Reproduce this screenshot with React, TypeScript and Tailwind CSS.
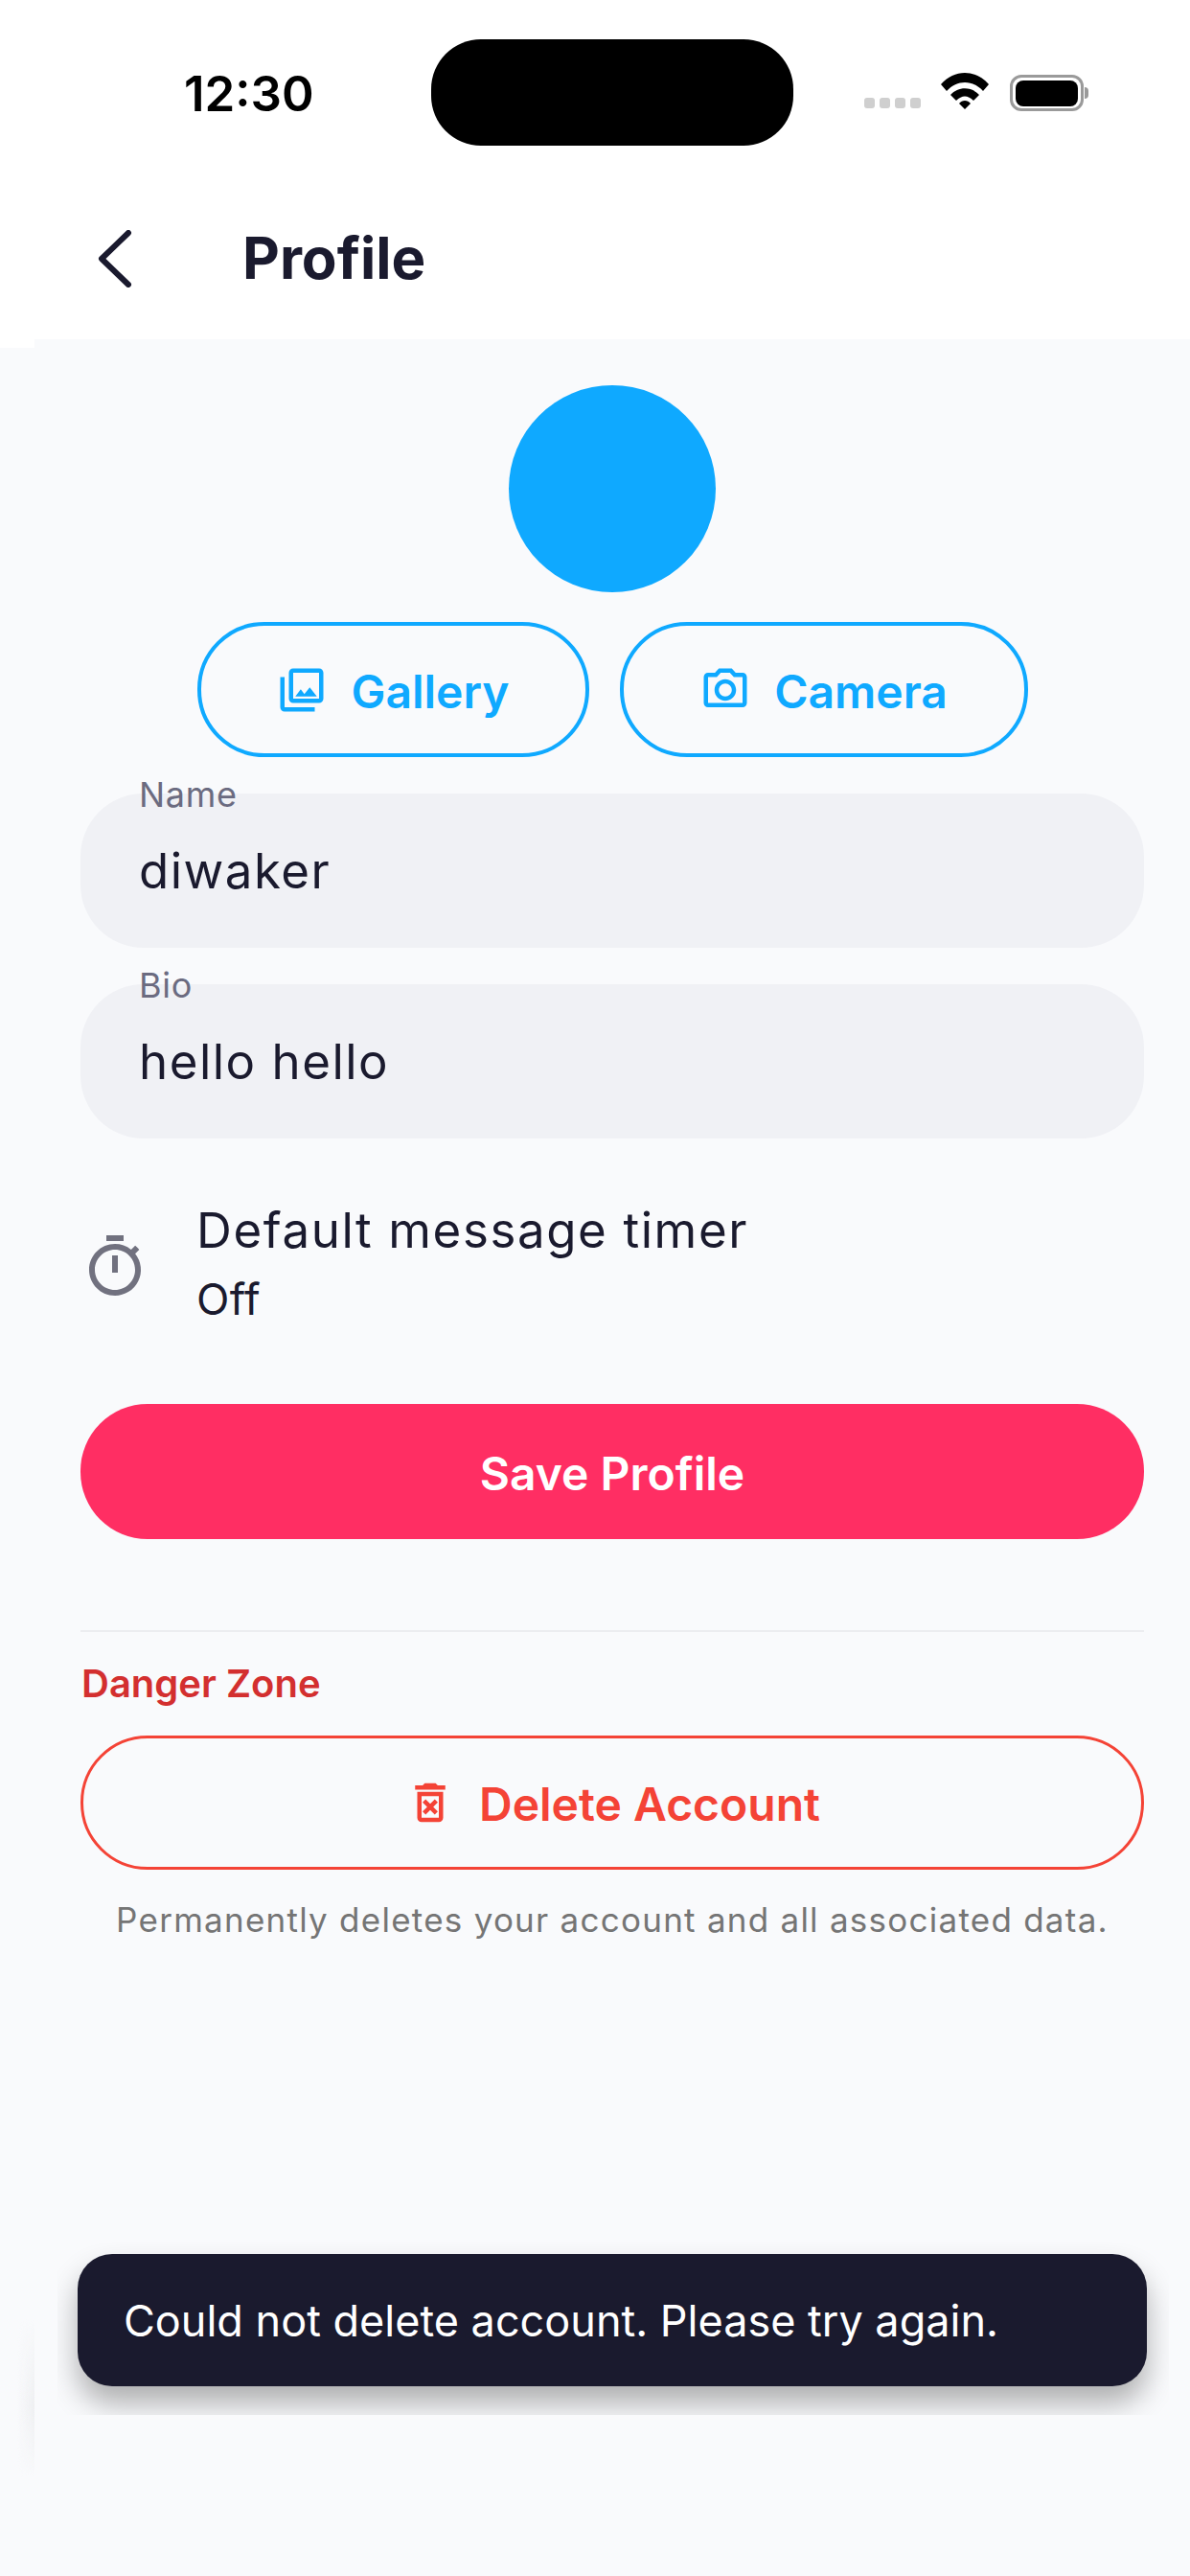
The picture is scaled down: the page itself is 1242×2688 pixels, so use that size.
import React from "react";
import {
  MdOutlinePhotoLibrary,
  MdOutlinePhotoCamera,
  MdOutlineTimer,
  MdOutlineDeleteForever,
} from "react-icons/md";

function StatusBar() {
  return (
    <div className="flex h-[111px] pt-[41px] box-content items-center">
      <span className="ml-[192px] w-[258px] text-[51px] font-semibold leading-none text-black mt-[2px]">12:30</span>
      <div className="h-[111px] w-[378px] rounded-[52px] bg-black" />
      <div className="ml-[74px] mt-[22px] flex gap-[5px]">
        <span className="h-[11px] w-[11px] rounded-[3px] bg-[#cfcfcf]" />
        <span className="h-[11px] w-[11px] rounded-[3px] bg-[#cfcfcf]" />
        <span className="h-[11px] w-[11px] rounded-[3px] bg-[#cfcfcf]" />
        <span className="h-[11px] w-[11px] rounded-[3px] bg-[#cfcfcf]" />
      </div>
      <svg className="ml-[21px] mb-[4px]" width="50" height="38" viewBox="0 0 50 38">
        <path d="M0 12 C14 -4 36 -4 50 12 L44 19 C33 7 17 7 6 19 Z" fill="#000" />
        <path d="M10 23 C18 14 32 14 40 23 L34 29 C28 23 22 23 16 29 Z" fill="#000" />
        <path d="M19 32 C22 28 28 28 31 32 L25 38 Z" fill="#000" />
      </svg>
      <div className="ml-[22px] mt-[1px] flex items-center">
        <div className="flex h-[38px] w-[77px] items-center justify-center rounded-[12px] border-[3px] border-[#9a9a9a]">
          <div className="h-[27px] w-[65px] rounded-[8px] bg-black" />
        </div>
        <div className="ml-[1px] h-[12px] w-[4px] rounded-r-full bg-[#9a9a9a]" />
      </div>
    </div>
  );
}

function Field({ label, value }: { label: string; value: string }) {
  return (
    <div className="relative flex h-[161px] items-center rounded-[66px] bg-[#F0F1F5] px-[61px]">
      <span className="absolute left-[61px] top-[-21px] text-[36px] leading-[44px] tracking-[0.7px] text-[#6B6B80]">
        {label}
      </span>
      <span className="pb-[1px] text-[51px] leading-none tracking-[1.5px] text-[#1A1A2E]">{value}</span>
    </div>
  );
}

export default function App() {
  return (
    <div className="relative h-[2688px] w-[1242px] overflow-hidden bg-[#F9FAFC] font-['Inter',sans-serif]">
      <div className="bg-white">
        <StatusBar />

        {/* Header */}
        <div className="flex h-[202px] items-center pt-[32px]">
          <svg className="ml-[100px] mt-[2px]" width="40" height="60" viewBox="0 0 40 60" fill="none">
            <path d="M34 3 L6 30 L34 57" stroke="#1A1A2E" strokeWidth="6" strokeLinecap="round" strokeLinejoin="round" />
          </svg>
          <h1 className="ml-[113px] text-[60px] font-[650] leading-none text-[#1A1A2E]">Profile</h1>
        </div>
      </div>
      <div className="h-[9px] w-[36px] bg-white" />

      {/* Body */}
      <div className="mt-[-9px] ml-[36px] px-[48px] pt-[48px]">
        <div className="mx-auto h-[216px] w-[216px] rounded-full bg-[#0FA9FF]" />

        <div className="mt-[31px] flex justify-center gap-[32px]">
          <button className="flex h-[141px] w-[409px] items-center justify-center gap-[24px] rounded-[70px] border-[4px] border-[#0FA9FF] text-[#0FA9FF]">
            <MdOutlinePhotoLibrary size={54} />
            <span className="pt-[5px] text-[48px] font-[570] leading-none">Gallery</span>
          </button>
          <button className="flex h-[141px] w-[426px] items-center justify-center gap-[24px] rounded-[70px] border-[4px] border-[#0FA9FF] text-[#0FA9FF]">
            <MdOutlinePhotoCamera size={54} />
            <span className="pt-[5px] text-[48px] font-[570] leading-none">Camera</span>
          </button>
        </div>

        <div className="mt-[38px] flex flex-col gap-[38px]">
          <Field label="Name" value="diwaker" />
          <Field label="Bio" value="hello hello" />
        </div>

        <div className="mt-[65px] flex items-center">
          <MdOutlineTimer size={72} className="mt-[8px] text-[#71717F]" />
          <div className="ml-[49px]">
            <p className="text-[51px] leading-[62px] tracking-[1.6px] text-[#1A1A2E]">Default message timer</p>
            <p className="mt-[14px] text-[45px] leading-[54px] tracking-[0.4px] text-[#1A1A2E]">Off</p>
          </div>
        </div>

        <button className="mt-[82px] flex h-[141px] w-full items-center justify-center rounded-[70px] bg-[#FF2E63] pt-[4px] text-[48px] font-[570] leading-none text-white">
          Save Profile
        </button>

        <div className="mt-[95px] h-[2px] bg-[#ECEDF0]" />

        <p className="ml-[1px] mt-[30px] text-[40px] font-[570] leading-[48px] text-[#D32F2F]">Danger Zone</p>

        <button className="mt-[30px] flex h-[140px] w-full items-center justify-center gap-[24px] rounded-[70px] border-[3px] border-[#F44336] text-[#F44336]">
          <MdOutlineDeleteForever size={54} />
          <span className="pt-[4px] text-[48px] font-[570] leading-none">Delete Account</span>
        </button>

        <p className="mt-[30px] text-center text-[35px] leading-[44px] tracking-[1.25px] text-[#757575]">
          Permanently deletes your account and all associated data.
        </p>
      </div>

      {/* faint leftover of the toast shadow, cut off at the body edge */}
      <div className="absolute left-[18px] top-[2420px] h-[165px] w-[18px] bg-linear-to-r from-transparent to-[#EEEFF1] [mask-image:linear-gradient(to_bottom,transparent,black_55%,transparent)]" />

      {/* Toast */}
      <div className="absolute left-[60px] top-[2330px] h-[190px] w-[1160px] overflow-hidden">
        <div className="ml-[21px] mt-[22px] flex h-[138px] w-[1116px] items-center rounded-[36px] bg-[#1A1A2E] pl-[48px] text-[45px] leading-none text-white shadow-[0_18px_30px_rgba(0,0,0,0.3)]">
          Could not delete account. Please try again.
        </div>
      </div>
    </div>
  );
}
